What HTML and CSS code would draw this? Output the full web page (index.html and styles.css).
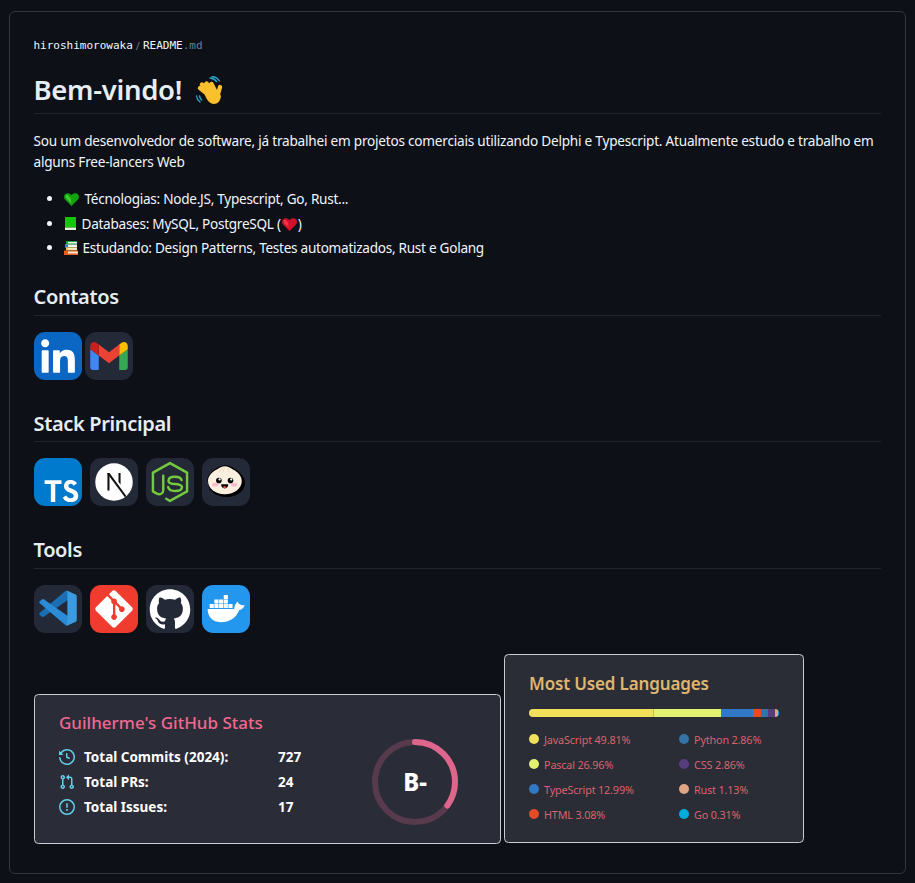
FILE: index.html
```html
<!DOCTYPE html>
<html lang="pt">
<head>
<meta charset="utf-8">
<title>README</title>
<link rel="stylesheet" href="styles.css">
</head>
<body>
<article class="readme">
  <div class="crumb"><span class="owner">hiroshimorowaka</span><span class="sep">/</span><span class="file">README<span class="ext">.md</span></span></div>
  <h1>Bem-vindo! <svg class="wave" viewBox="8 4 28 31"><g fill="none" stroke-linecap="round"><path stroke="#29a9cc" stroke-width="1.300" d="M23 6c3 .2 5 1.500 6.500 3.500M25 4.500c3.500.3 6 2 7.500 4.500M9.500 24c.3 2.500 1.500 4.500 3.500 6M12.500 24c.3 1.500 1 3 2.200 4"/><g stroke="#111" stroke-width="6.200"><path d="M13 16l10 8M15 12.500l10 8.500M19.500 11.500l7 8.500M24.500 12l4 8M33 15l-2.500 9"/><path d="M18 23c2 5 6 8 9 8 4 0 6-4 6-8"/></g><g stroke="#fbc02d" stroke-width="4.400"><path d="M13 16l10 8M15 12.500l10 8.500M19.500 11.500l7 8.500M24.500 12l4 8M33 15l-2.500 9"/></g></g><path fill="#fbc02d" d="M17 20l6-2 8 1 3 5c-.5 5-3.500 8-7 8-4 0-8-4-10-12z"/></svg></h1>
  <p class="intro">Sou um desenvolvedor de software, já trabalhei em projetos comerciais utilizando Delphi e Typescript. Atualmente estudo e trabalho em alguns Free-lancers Web</p>
  <ul class="facts">
    <li><svg class="emoji heart-g" viewBox="0 0 16 14"><path fill="#13a10e" d="M8 14 1 7C-.8 5-.2 1.500 2.500.6 4.700-.1 6.800.7 8 2.500 9.200.7 11.300-.1 13.500.6 16.200 1.500 16.800 5 15 7z"/><path fill="#3fd02f" d="M3.500 2c-1.200 0-2 1.300-1.500 2.800l6 6.700-1-5.500z"/></svg>Técnologias: Node.JS, Typescript, Go, Rust...</li>
    <li><svg class="emoji book" viewBox="0 0 13 15"><rect width="13" height="15" rx="1.500" fill="#0b0f0b"/><rect x="1" y="1" width="11" height="10.500" fill="#16c60c"/><rect x="1" y="11.500" width="11" height="2.500" fill="#dff5dc"/></svg>Databases: MySQL, PostgreSQL (<svg class="emoji heart-r" viewBox="0 0 16 14"><path fill="#d3112a" d="M8 14 1 7C-.8 5-.2 1.500 2.500.6 4.700-.1 6.800.7 8 2.500 9.200.7 11.300-.1 13.500.6 16.200 1.500 16.800 5 15 7z"/><path fill="#f03a4c" d="M3.500 2c-1.200 0-2 1.300-1.500 2.800l5 5.200-.5-5z"/></svg>)</li>
    <li><svg class="emoji books" viewBox="0 0 14 14"><rect x="2" width="11" height="3.500" fill="#16a34a"/><rect x="4" y="1" width="9" height="1.500" fill="#f2f2f2"/><rect x="1" y="3.500" width="12" height="3" fill="#f2f2f2"/><rect x="1" y="3.500" width="3" height="3" fill="#2f7fd6"/><rect x="2" y="6.500" width="11" height="3" fill="#f5c542"/><rect x="4" y="7.200" width="9" height="1.500" fill="#f2f2f2"/><rect y="9.500" width="14" height="4.500" fill="#e0601f"/><rect x="4" y="10.500" width="10" height="2" fill="#f7e3d2"/></svg>Estudando: Design Patterns, Testes automatizados, Rust e Golang</li>
  </ul>

  <h2>Contatos</h2>
  <div class="icons icons-tight">
    <svg class="skill" viewBox="0 0 256 256"><rect width="256" height="256" fill="#0A66C2" rx="60"/><path fill="#fff" d="M184.715 217.685h29.27a4 4 0 0 0 4-3.999l.015-61.842c0-32.323-6.965-57.168-44.738-57.168c-14.359-.534-27.9 6.868-35.207 19.228a.32.32 0 0 1-.595-.161V101.66a4 4 0 0 0-4-4h-27.777a4 4 0 0 0-4 4v112.02a4 4 0 0 0 4 4h29.268a4 4 0 0 0 4-4v-55.373c0-15.657 2.97-30.82 22.381-30.82c19.135 0 19.383 17.916 19.383 31.834v54.364a4 4 0 0 0 4 4ZM38 59.628c0 11.864 9.767 21.626 21.632 21.626c11.862-.001 21.623-9.769 21.623-21.631C81.253 47.761 71.491 38 59.628 38C47.762 38 38 47.763 38 59.627Zm6.959 158.058h29.307a4 4 0 0 0 4-4V101.66a4 4 0 0 0-4-4H44.959a4 4 0 0 0-4 4v112.025a4 4 0 0 0 4 4Z"/></svg>
    <svg class="skill" viewBox="0 0 256 256"><rect width="256" height="256" fill="#242938" rx="60"/><path fill="#4285F4" d="M41.636 203.039h31.818v-77.273L28 91.676v97.727c0 7.545 6.114 13.636 13.636 13.636"/><path fill="#34A853" d="M182.545 203.039h31.819c7.545 0 13.636-6.114 13.636-13.636V91.675l-45.455 34.091"/><path fill="#FBBC04" d="M182.545 66.675v59.091L228 91.676V73.492c0-16.863-19.25-26.477-32.727-16.363"/><path fill="#EA4335" d="M73.455 125.766V66.675L128 107.584l54.545-40.909v59.091L128 166.675"/><path fill="#C5221F" d="M28 73.492v18.184l45.454 34.09V66.675L60.727 57.13C47.227 47.016 28 56.63 28 73.492"/></svg>
  </div>

  <h2>Stack Principal</h2>
  <div class="icons">
    <svg class="skill" viewBox="0 0 256 256"><rect width="256" height="256" fill="#007ACC" rx="60"/><path fill="#fff" d="M56.611 128.849l-.081 10.483h33.32v94.68H113.42v-94.68h33.32v-10.28c0-5.69-.122-10.444-.284-10.566c-.122-.162-20.399-.244-44.983-.203l-44.739.122l-.122 10.443Z"/><path fill="#fff" d="M206.567 118.108c6.501 1.626 11.459 4.51 15.97 9.205c2.336 2.499 5.8 7.051 6.083 8.148c.08.325-11.053 7.8-17.798 11.987c-.244.163-1.22-.894-2.317-2.52c-3.291-4.795-6.745-6.868-12.028-7.234c-7.76-.528-12.759 3.535-12.718 10.321c0 1.992.284 3.17 1.097 4.795c1.707 3.536 4.876 5.649 14.832 9.957c18.326 7.881 26.168 13.083 31.045 20.48c5.445 8.25 6.664 21.415 2.966 31.208c-4.063 10.646-14.141 17.879-28.323 20.276c-4.388.772-14.791.65-19.504-.203c-10.281-1.829-20.033-6.908-26.047-13.572c-2.357-2.601-6.949-9.387-6.664-9.875c.122-.162 1.178-.812 2.356-1.503c1.138-.65 5.446-3.129 9.509-5.486l7.355-4.267l1.544 2.276c2.154 3.291 6.867 7.802 9.712 9.305c8.167 4.307 19.383 3.698 24.909-1.26c2.357-2.153 3.332-4.388 3.332-7.68c0-2.966-.366-4.266-1.91-6.501c-1.99-2.845-6.054-5.243-17.595-10.24c-13.206-5.69-18.895-9.225-24.096-14.833c-3.007-3.25-5.852-8.452-7.03-12.8c-.975-3.617-1.22-12.678-.447-16.335c2.722-12.76 12.353-21.659 26.25-24.3c4.51-.853 14.994-.528 19.424.569Z"/></svg>
    <svg class="skill" viewBox="0 0 256 256"><rect width="256" height="256" fill="#242938" rx="60"/><circle cx="128" cy="128" r="100" fill="#fff"/><path fill="#111" d="M93 80h11v93H93zM152 80h11v62l-11-15z"/><path fill="#111" d="M93 80h11l90 122c-3 2.500-6 4.500-9 6.500L93 84z"/></svg>
    <svg class="skill" viewBox="0 0 256 256"><rect width="256" height="256" fill="#242938" rx="60"/><path fill="none" stroke="#74c93f" stroke-width="13" stroke-linejoin="round" stroke-linecap="round" d="M108 217l20 12 91-51V78L128 27 37 78v100l21 12c17 8 34 0 34-18V94"/><path fill="none" stroke="#74c93f" stroke-width="13" stroke-linecap="round" stroke-linejoin="round" d="M190 118c-3-12-20-18-37-18-20 0-33 8-33 22 0 28 72 6 72 34 0 14-17 20-37 20s-35-8-37-22"/></svg>
    <svg class="skill" viewBox="0 0 256 256"><rect width="256" height="256" fill="#242938" rx="60"/><ellipse cx="131" cy="134" rx="98" ry="74" fill="#000"/><path fill="#000" d="M124 38c18 0 34 8 48 18 30 16 48 38 48 68H28c0-30 20-52 48-68 14-10 30-18 48-18z"/><path fill="#fbf0df" d="M122 44c16 0 29 7 43 17 28 15 47 34 47 62 0 42-40 70-90 70s-90-28-90-70c0-28 19-47 47-62 14-10 27-17 43-17z"/><path fill="none" stroke="#d9c6ad" stroke-width="3" d="M122 50c-5 8-8 16-8 24M110 54c-9 6-16 13-18 22M134 54c6 6 9 13 10 22"/><ellipse cx="70" cy="142" rx="17" ry="10" fill="#febbd0"/><ellipse cx="172" cy="142" rx="17" ry="10" fill="#febbd0"/><circle cx="90" cy="120" r="15" fill="#000"/><circle cx="152" cy="120" r="15" fill="#000"/><circle cx="94" cy="114" r="6" fill="#fff"/><circle cx="156" cy="114" r="6" fill="#fff"/><path fill="#000" d="M102 140h38c0 14-8 22-19 22s-19-8-19-22z"/><path fill="#ff6164" d="M111 155c6-5 14-5 20 0-5 6-15 6-20 0z"/></svg>
  </div>

  <h2>Tools</h2>
  <div class="icons">
    <svg class="skill" viewBox="0 0 256 256"><rect width="256" height="256" fill="#242938" rx="60"/><g transform="translate(28 30) scale(2 1.860)"><path fill="#1b6eb1" d="M96.500 10.800 75.900.9a6.200 6.200 0 0 0-7.100 1.200L1.400 63.600a4.200 4.200 0 0 0 0 6.200l5.500 5a4.200 4.200 0 0 0 5.300.2L93.300 14.100c2.700-2.100 6.700-.1 6.700 3.300v-.8c0-2.400-1.400-4.600-3.500-5.800z"/><path fill="#2c8bd6" d="M96.500 89.200 75.900 99.100a6.200 6.200 0 0 1-7.100-1.200L1.400 36.400a4.200 4.200 0 0 1 0-6.200l5.500-5a4.200 4.200 0 0 1 5.300-.2l81.100 60.900c2.700 2.100 6.700.1 6.700-3.300v.8c0 2.400-1.400 4.600-3.500 5.800z"/><path fill="#3b9be0" d="M75.900 99.100a6.200 6.200 0 0 1-7.100-1.200c2.300 2.300 6.200.7 6.200-2.600V4.700c0-3.300-3.900-4.900-6.200-2.600A6.200 6.200 0 0 1 75.900.9l20.600 9.900a6.200 6.200 0 0 1 3.500 5.600v67.200a6.200 6.200 0 0 1-3.500 5.600z"/></g></svg>
    <svg class="skill" viewBox="0 0 256 256"><rect width="256" height="256" fill="#F03C2E" rx="60"/><g transform="translate(28 28) scale(8.333)"><path fill="#fff" d="M23.546 10.930L13.067.452c-.604-.603-1.582-.603-2.188 0L8.708 2.627l2.760 2.760c.645-.215 1.379-.07 1.889.441.516.515.658 1.258.438 1.900l2.658 2.660c.645-.223 1.387-.078 1.900.435.721.72.721 1.884 0 2.604-.719.719-1.881.719-2.600 0-.539-.541-.674-1.337-.404-1.996L12.860 8.955v6.525c.176.086.342.203.488.348.713.721.713 1.883 0 2.600-.719.721-1.889.721-2.609 0-.719-.719-.719-1.879 0-2.598.182-.18.387-.316.605-.406V8.835c-.217-.091-.424-.222-.6-.401-.545-.545-.676-1.342-.396-2.009L7.636 3.700.45 10.881c-.6.605-.6 1.584 0 2.189l10.480 10.477c.604.604 1.582.604 2.186 0l10.430-10.430c.605-.603.605-1.584 0-2.187"/></g></svg>
    <svg class="skill" viewBox="0 0 256 256"><rect width="256" height="256" fill="#242938" rx="60"/><g transform="translate(20 20) scale(9)"><path fill="#fff" d="M12 .297c-6.630 0-12 5.373-12 12 0 5.303 3.438 9.800 8.205 11.385.6.113.82-.258.82-.577 0-.285-.01-1.040-.015-2.040-3.338.724-4.042-1.610-4.042-1.610C4.422 18.070 3.633 17.700 3.633 17.700c-1.087-.744.084-.729.084-.729 1.205.084 1.838 1.236 1.838 1.236 1.070 1.835 2.809 1.305 3.495.998.108-.776.417-1.305.76-1.605-2.665-.3-5.466-1.332-5.466-5.930 0-1.310.465-2.380 1.235-3.220-.135-.303-.54-1.523.105-3.176 0 0 1.005-.322 3.300 1.230.96-.267 1.980-.399 3-.405 1.020.006 2.040.138 3 .405 2.280-1.552 3.285-1.230 3.285-1.230.645 1.653.24 2.873.12 3.176.765.84 1.230 1.910 1.230 3.220 0 4.610-2.805 5.625-5.475 5.920.42.36.81 1.096.81 2.220 0 1.606-.015 2.896-.015 3.286 0 .315.21.69.825.57C20.565 22.092 24 17.592 24 12.297c0-6.627-5.373-12-12-12"/></g></svg>
    <svg class="skill" viewBox="0 0 256 256"><rect width="256" height="256" fill="#2396ED" rx="60"/><path fill="#fff" d="M30 128H172c0-16 8-30 18-40 4 12 14 20 38 20-6 16-20 24-30 26-14 38-50 64-98 64-44 0-70-30-70-70z"/><path fill="#fff" d="M41 101h22v22H41zM66 101h22v22H66zM91 101h22v22H91zM116 101h22v22h-22zM141 101h22v22h-22zM66 77h22v22H66zM91 77h22v22H91zM116 77h22v22h-22zM116 53h22v22h-22z"/></svg>
  </div>

  <div class="cards">
    <section class="card stats">
      <div class="stats-main">
        <h3 class="stats-title">Guilherme's GitHub Stats</h3>
        <div class="stat"><svg class="octicon" viewBox="0 0 16 16"><path fill-rule="evenodd" d="M1.643 3.143L.427 1.927A.25.25 0 000 2.104V5.750c0 .138.112.25.25.25h3.646a.25.25 0 00.177-.427L2.715 4.215a6.500 6.500 0 11-1.180 4.458.75.75 0 10-1.493.154 8.001 8.001 0 101.600-5.684zM7.750 4a.75.75 0 01.75.75v2.992l2.028.812a.75.75 0 01-.557 1.392l-2.500-1A.75.75 0 017 8.250v-3.500A.75.75 0 017.750 4z"/></svg><span class="stat-label">Total Commits (2024):</span><span>727</span></div>
        <div class="stat"><svg class="octicon" viewBox="0 0 16 16"><path fill-rule="evenodd" d="M7.177 3.073L9.573.677A.25.25 0 0110 .854v4.792a.25.25 0 01-.427.177L7.177 3.427a.25.25 0 010-.354zM3.750 2.500a.75.75 0 100 1.500.75.75 0 000-1.500zm-2.250.75a2.250 2.250 0 113 2.122v5.256a2.251 2.251 0 11-1.500 0V5.372A2.250 2.250 0 011.500 3.250zM11 2.500h-1V4h1a1 1 0 011 1v5.628a2.251 2.251 0 101.500 0V5A2.500 2.500 0 0011 2.500zm1 10.250a.75.75 0 111.500 0 .75.75 0 01-1.500 0zM3.750 12a.75.75 0 100 1.500.75.75 0 000-1.500z"/></svg><span class="stat-label">Total PRs:</span><span>24</span></div>
        <div class="stat"><svg class="octicon" viewBox="0 0 16 16"><path fill-rule="evenodd" d="M8 1.500a6.500 6.500 0 100 13 6.500 6.500 0 000-13zM0 8a8 8 0 1116 0A8 8 0 010 8zm9 3a1 1 0 11-2 0 1 1 0 012 0zm-.25-6.250a.75.75 0 00-1.500 0v3.500a.75.75 0 001.500 0v-3.500z"/></svg><span class="stat-label">Total Issues:</span><span>17</span></div>
      </div>
      <div class="grade"><svg class="ring" viewBox="0 0 86 86"><circle cx="43" cy="43" r="40" class="ring-base"/><circle cx="43" cy="43" r="40" class="ring-value" pathLength="100" stroke-dasharray="35 100" transform="rotate(-90 43 43)"/></svg><span class="grade-text">B-</span></div>
    </section>
    <section class="card langs">
      <h3 class="langs-title">Most Used Languages</h3>
      <div class="bar">
        <i class="seg" style="width:49.81%;background:#f1e05a"></i><i class="seg" style="width:26.96%;background:#e3f171"></i><i class="seg" style="width:12.99%;background:#3178c6"></i><i class="seg" style="width:3.08%;background:#e34c26"></i><i class="seg" style="width:2.86%;background:#3572a5"></i><i class="seg" style="width:2.86%;background:#563d7c"></i><i class="seg" style="width:1.13%;background:#dea584"></i><i class="seg" style="width:0.31%;background:#00add8"></i>
      </div>
      <div class="legend">
        <div class="lang"><i class="dot" style="background:#f1e05a"></i>JavaScript 49.81%</div>
        <div class="lang"><i class="dot" style="background:#3572a5"></i>Python 2.86%</div>
        <div class="lang"><i class="dot" style="background:#e3f171"></i>Pascal 26.96%</div>
        <div class="lang"><i class="dot" style="background:#563d7c"></i>CSS 2.86%</div>
        <div class="lang"><i class="dot" style="background:#3178c6"></i>TypeScript 12.99%</div>
        <div class="lang"><i class="dot" style="background:#dea584"></i>Rust 1.13%</div>
        <div class="lang"><i class="dot" style="background:#e34c26"></i>HTML 3.08%</div>
        <div class="lang"><i class="dot" style="background:#00add8"></i>Go 0.31%</div>
      </div>
    </section>
  </div>
</article>
</body>
</html>
```

FILE: styles.css
```css
* { box-sizing: border-box; }
html, body { height: 100%; }
body {
  margin: 0;
  padding: 11px 9px 0;
  background: #0d1017;
  color: #f0f6fc;
  font-family: "Noto Sans", "Open Sans", sans-serif;
  font-size: 13.600px;
  line-height: 21px;
  overflow: hidden;
}
.readme {
  height: 863px;
  border: 1px solid #30363d;
  border-radius: 6px;
  padding: 24px 24px 0 23.500px;
}
.crumb {
  height: 20px;
  font-family: "DejaVu Sans Mono", monospace;
  font-size: 11px;
  line-height: 20px;
  display: flex;
  color: #f0f6fc;
}
.sep { margin: 0 3px; color: #6e7681; font-family: "Noto Sans", sans-serif; }
.ext { color: #6e7e96; }
h1 {
  margin: 16px 0 16px;
  font-size: 27.500px;
  line-height: 35px;
  font-weight: 600;
  letter-spacing: -0.3px;
  color: #e6edf3;
  padding-bottom: 6px;
  border-bottom: 1px solid #21262d;
}
h2 {
  margin: 24px 0 16px;
  font-size: 20px;
  line-height: 30px;
  font-weight: 600;
  letter-spacing: -0.35px;
  color: #e6edf3;
  padding-bottom: 2.550px;
  border-bottom: 1px solid #21262d;
}
.wave { width: 28px; height: 31px; vertical-align: -7px; margin-left: 6px; }
.intro { margin: 0 0 16px; letter-spacing: -0.22px; }
.facts { margin: 0 0 24.400px; padding: 0 0 0 30px; letter-spacing: -0.28px; }
.facts li { margin-top: 3.500px; height: 21px; }
.facts li::marker { font-size: 14px; }
.emoji { display: inline-block; vertical-align: -2px; }
.heart-g { width: 15px; height: 13px; margin-right: 6px; }
.book { width: 13px; height: 15px; margin-right: 5px; }
.heart-r { width: 15px; height: 13px; margin: 0 1px; }
.books { width: 14px; height: 14px; margin-right: 5px; }
.icons { display: flex; gap: 8px; height: 53px; padding-left: 0.500px; }
.icons-tight { gap: 3px; }
.skill { width: 48px; height: 48px; flex: none; }
.cards {
  display: flex;
  align-items: flex-end;
  gap: 3px;
  margin-top: 15.500px;
  padding-left: 0.500px;
}
.card {
  border: 1px solid #c9ccd1;
  border-radius: 4.500px;
  flex: none;
}
.stats {
  width: 467px;
  height: 150px;
  background: #2a2c38;
  display: flex;
  justify-content: space-between;
  padding: 15px 42px 0 24px;
}
.stats-title {
  margin: 0 0 9px;
  height: 26px;
  font-size: 17px;
  line-height: 26px;
  font-weight: 500;
  color: #f0688f;
}
.stat {
  display: flex;
  align-items: center;
  height: 25px;
  font-size: 13.500px;
  font-weight: 700;
  color: #fff;
}
.octicon { width: 16px; height: 16px; fill: #63cde8; margin-right: 9px; flex: none; }
.stat-label { width: 194px; }
.grade { position: relative; width: 86px; height: 86px; margin-top: 29px; }
.ring { width: 86px; height: 86px; display: block; }
.ring-base { fill: none; stroke: #de668c; stroke-width: 6; opacity: 0.25; }
.ring-value { fill: none; stroke: #de668c; stroke-width: 6; stroke-linecap: round; }
.grade-text {
  position: absolute;
  inset: 0;
  display: flex;
  align-items: center;
  justify-content: center;
  font-size: 24px;
  font-weight: 800;
  color: #fff;
}
.langs {
  width: 300px;
  height: 189px;
  margin-bottom: 1px;
  background: #2a2d36;
  padding: 15px 24px 0;
}
.langs-title {
  margin: 0 0 11px;
  height: 28px;
  font-size: 17px;
  line-height: 28px;
  font-weight: 600;
  letter-spacing: -0.15px;
  color: #e0b66f;
}
.bar {
  display: flex;
  width: 250px;
  height: 8px;
  border-radius: 4px;
  overflow: hidden;
}
.seg { display: block; height: 8px; flex: none; }
.seg:first-child { box-shadow: inset -1px 0 #c9bb4c; }
.legend {
  display: grid;
  grid-template-columns: 150px 100px;
  grid-auto-rows: 25px;
  margin-top: 10px;
}
.lang {
  display: flex;
  align-items: center;
  gap: 5px;
  font-size: 10.800px;
  letter-spacing: -0.15px;
  color: #d9636f;
}
.dot { width: 10px; height: 10px; border-radius: 50%; flex: none; }
```
